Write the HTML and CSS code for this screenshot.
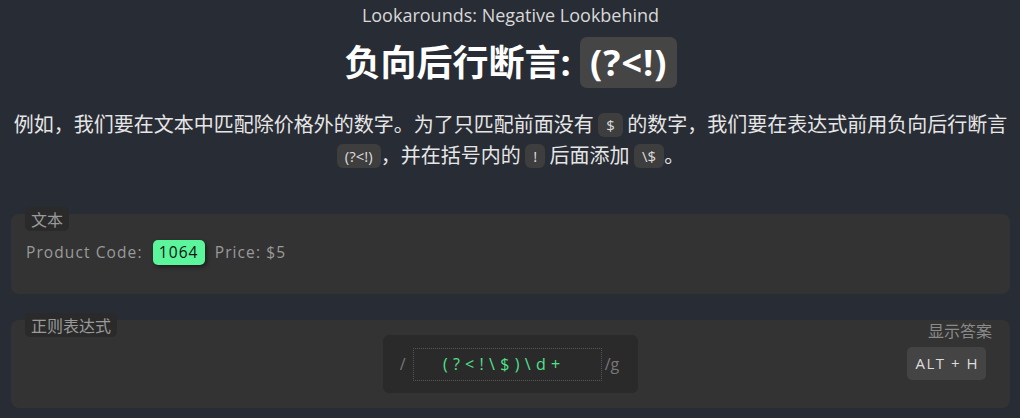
FILE: index.html
```html
<!DOCTYPE html>
<html lang="zh">
<head>
<meta charset="utf-8">
<title>Lookarounds: Negative Lookbehind</title>
<link rel="stylesheet" href="styles.css">
</head>
<body>
<main class="page">
  <header class="intro">
    <div class="subtitle">Lookarounds: Negative Lookbehind</div>
    <h1 class="title">负向后行断言: <code class="title-code">(?&lt;!)</code></h1>
    <p class="desc">例如，我们要在文本中匹配除价格外的数字。为了只匹配前面没有 <code class="ic">$</code> 的数字，我们要在表达式前用负向后行断言 <code class="ic">(?&lt;!)</code>，并在括号内的 <code class="ic">!</code> 后面添加 <code class="ic">\$</code>。</p>
  </header>

  <section class="card card-text">
    <span class="card-label">文本</span>
    <div class="sample">Product Code: <mark class="hit">1064</mark> Price: $5</div>
  </section>

  <section class="card card-regex">
    <span class="card-label">正则表达式</span>
    <div class="regex-row">
      <div class="spacer"></div>
      <div class="regex-box">
        <span class="slash">/</span>
        <div class="regex-input">(?&lt;!\$)\d+</div>
        <span class="flags">/g</span>
      </div>
      <div class="answer">
        <span class="answer-label">显示答案</span>
        <span class="kbd">ALT + H</span>
      </div>
    </div>
  </section>
</main>
</body>
</html>
```
FILE: styles.css
```css
* { box-sizing: border-box; }
html, body { margin: 0; padding: 0; }
body {
  background: #282c34;
  color: #e6e6e6;
  font-family: "Noto Sans", "Noto Sans CJK SC", sans-serif;
  width: 1020px;
  height: 418px;
  overflow: hidden;
}
.page {
  padding: 0 10px 0 11px;
}
.intro {
  text-align: center;
}
.subtitle {
  font-family: "Open Sans", "Noto Sans CJK SC", sans-serif;
  font-size: 18px;
  line-height: 24px;
  padding-top: 3px;
  color: #d8d8d8;
}
.title {
  margin: 10px 0 0 0;
  font-family: "Open Sans", "Noto Sans CJK SC", sans-serif;
  font-size: 36px;
  font-weight: 700;
  line-height: 51px;
  height: 51px;
  color: #ffffff;
}
.title-code {
  display: inline-block;
  vertical-align: top;
  font-family: "Open Sans", sans-serif;
  font-weight: 700;
  font-size: 36px;
  letter-spacing: 1px;
  background: #454545;
  border-radius: 7px;
  padding: 0 9px 0 10px;
  line-height: 51px;
  height: 51px;
}
.desc {
  margin: 20px 0 0 0;
  font-size: 20px;
  line-height: 31px;
  color: #e6e6e6;
  font-family: "Noto Sans CJK SC", sans-serif;
}
.ic {
  display: inline-block;
  white-space: nowrap;
  vertical-align: 1px;
  font-family: "Open Sans", sans-serif;
  font-size: 15px;
  line-height: 24px;
  height: 24px;
  background: #3e3e3e;
  color: #dcdcdc;
  border-radius: 6px;
  padding: 0 8px;
}
.card {
  position: relative;
  background: #333333;
  border-radius: 8px;
}
.card-label {
  position: absolute;
  left: 14px;
  top: -7px;
  background: #2a2a2a;
  color: #9a9a9a;
  font-family: "Noto Sans CJK SC", sans-serif;
  font-size: 16px;
  line-height: 24px;
  padding: 0 6px;
  border-radius: 5px;
}
.card-text {
  margin-top: 44px;
  height: 80px;
  padding: 26px 15px 0 15px;
}
.sample {
  font-family: "Open Sans", sans-serif;
  font-size: 15.5px;
  letter-spacing: 1.1px;
  color: #9a9a9a;
  line-height: 25px;
}
.hit {
  display: inline-block;
  background: #5bf59c;
  color: #111;
  border-radius: 5px;
  padding: 0 6px;
  margin: 0 5px;
  line-height: 25px;
  box-shadow: 2px 2px 4px rgba(0,0,0,0.45);
  letter-spacing: 1.1px;
}
.card-regex {
  margin-top: 26px;
  height: 88px;
  padding: 0 18px;
}
.regex-row {
  display: grid;
  grid-template-columns: 1fr auto 1fr;
  align-items: start;
}
.regex-box {
  margin-top: 15px;
  display: flex;
  align-items: center;
  background: #2a2a2a;
  border-radius: 6px;
  height: 58px;
  padding: 0 19px 0 17px;
  gap: 3px;
}
.slash, .flags {
  font-family: "Open Sans", sans-serif;
  font-size: 16px;
  color: #777;
}
.slash { margin-right: 4px; }
.regex-input {
  width: 189px;
  height: 33px;
  border: 1px dotted #555;
  color: #4fe38c;
  font-family: "Open Sans", sans-serif;
  font-size: 16px;
  letter-spacing: 5.3px;
  display: flex;
  align-items: center;
  justify-content: center;
  padding-right: 6px;
}
.answer {
  justify-self: end;
  display: flex;
  flex-direction: column;
  align-items: flex-end;
}
.answer-label {
  font-family: "Noto Sans CJK SC", sans-serif;
  font-size: 16px;
  line-height: 20px;
  color: #8a8a8a;
}
.kbd {
  margin-top: 7px;
  margin-right: 6px;
  background: #444;
  color: #ddd;
  font-family: "Open Sans", sans-serif;
  font-size: 15px;
  letter-spacing: 1.5px;
  border-radius: 5px;
  height: 33px;
  line-height: 33px;
  padding: 0 7px 0 8px;
}
```
